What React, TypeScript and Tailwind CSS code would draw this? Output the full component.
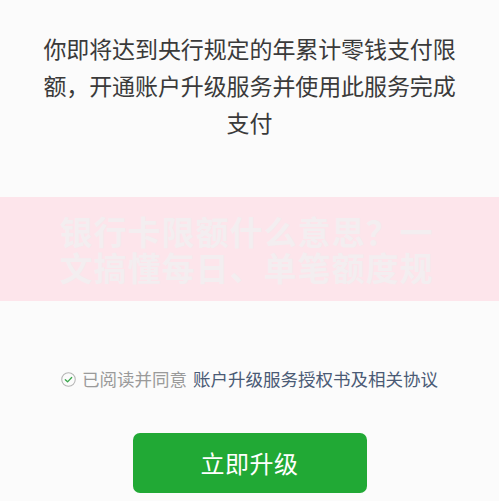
import React from "react";

const CheckCircle: React.FC = () => (
  <svg
    className="w-[15px] h-[15px] shrink-0"
    viewBox="0 0 16 16"
    fill="none"
    xmlns="http://www.w3.org/2000/svg"
  >
    <circle cx="8" cy="8" r="7.2" stroke="#b5b5b5" strokeWidth="1.1" />
    <path
      d="M4.6 8.2L7 10.5L11.4 5.8"
      stroke="#3aa64c"
      strokeWidth="1.4"
      strokeLinecap="round"
      strokeLinejoin="round"
    />
  </svg>
);

const App: React.FC = () => {
  return (
    <div
      className="w-[499px] h-[501px] overflow-hidden bg-[#fbfbfb] flex flex-col"
      style={{ fontFamily: '"Noto Sans CJK SC", "Noto Sans", sans-serif' }}
    >
      {/* 提示文案 */}
      <p className="mt-[30px] text-center whitespace-nowrap text-[23px] leading-[37px] text-[#3a3a3a] tracking-[-0.1px]">
        你即将达到央行规定的年累计零钱支付限
        <br />
        额，开通账户升级服务并使用此服务完成
        <br />
        支付
      </p>

      {/* 横幅水印 */}
      <div className="mt-[56px] h-[104px] bg-[#fde5eb] flex items-center justify-center">
        <p className="w-[380px] text-[33px] leading-[36px] font-bold text-[#f3eef0] tracking-[1px]">
          银行卡限额什么意思？一文搞懂每日、单笔额度规
        </p>
      </div>

      {/* 协议 */}
      <div className="mt-[68px] flex items-center justify-center gap-[6px] text-[17.5px] leading-[20px]">
        <CheckCircle />
        <span className="text-[#9a9a9a]">已阅读并同意</span>
        <span className="text-[#4a5a75]">账户升级服务授权书及相关协议</span>
      </div>

      <div className="mt-[44px] flex justify-center">
        <button className="w-[234px] h-[60px] rounded-[7px] bg-[#21a935] text-white text-[24px] tracking-[0.5px]">
          立即升级
        </button>
      </div>
    </div>
  );
};

export default App;
